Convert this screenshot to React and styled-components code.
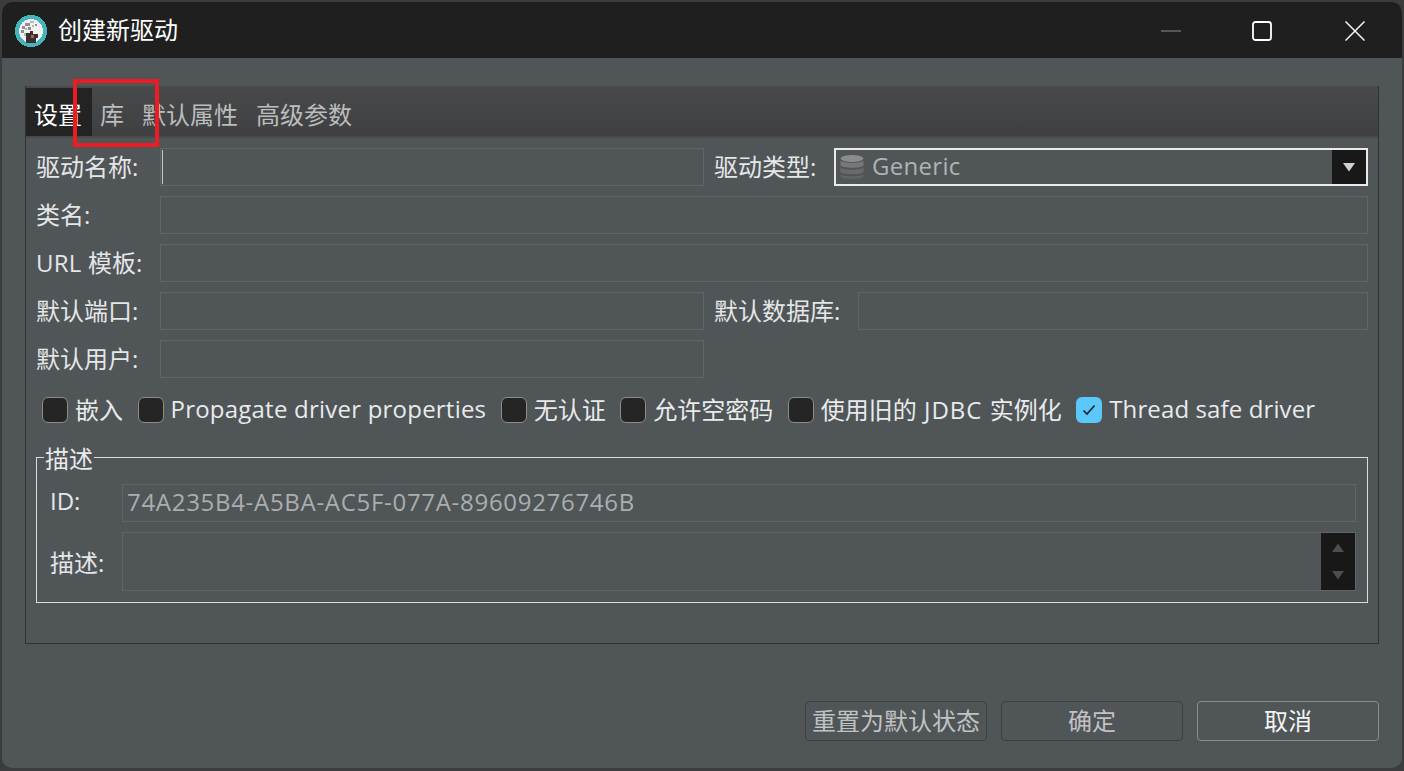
import React from "react";
import styled, { createGlobalStyle } from "styled-components";

const GlobalStyle = createGlobalStyle`
  html, body {
    margin: 0;
    padding: 0;
    background: #3b3c3d;
  }
  body {
    font-family: "Open Sans", "Noto Sans CJK SC", sans-serif;
    font-size: 24px;
    overflow: hidden;
  }
  * {
    box-sizing: border-box;
  }
`;

const Tracked = styled.span`
  letter-spacing: ${({ $ls }) => $ls}px;
`;

const Logo = () => (
  <LogoSvg viewBox="0 0 32 32" width="32" height="32" shapeRendering="crispEdges">
    <circle cx="16" cy="16" r="16" fill="#45b4bf" />
    <circle cx="16" cy="16" r="12" fill="#f2f2f2" />
    <path d="M7 11h3v3H7zM10 8h5v3h-5zM6 15h3v3H6zM13 12h3v3h-3zM20 9h2v2h-2z" fill="#8f8f8f" />
    <path d="M15 6h4v2h-4zM10 13h2v2h-2zM17 10h2v2h-2zM9 18h2v3H9z" fill="#b5b5b5" />
    <path d="M11 18h4v-2h3v3h5v4h-2v5H11z" fill="#3c2f2d" />
    <path d="M16 20h3v3h-3z" fill="#8a6e68" />
  </LogoSvg>
);

const Minimize = () => (
  <svg width="20" height="20" viewBox="0 0 20 20">
    <path d="M0 10h20" stroke="#6a6a6a" strokeWidth="1.6" />
  </svg>
);

const Maximize = () => (
  <svg width="20" height="20" viewBox="0 0 20 20">
    <rect x="1" y="1" width="18" height="18" rx="2.5" fill="none" stroke="#fff" strokeWidth="1.8" />
  </svg>
);

const Close = () => (
  <svg width="20" height="20" viewBox="0 0 20 20">
    <path d="M0.5 0.5l19 19M19.5 0.5l-19 19" stroke="#f4f4f4" strokeWidth="1.5" />
  </svg>
);

const DatabaseIcon = () => (
  <svg width="26" height="26" viewBox="0 0 26 26">
    <ellipse cx="13" cy="4.5" rx="11.5" ry="3.5" fill="#8b8b8b" />
    <path d="M1.5 6.5c2 3 21 3 23 0v5c-2 3-21 3-23 0z" fill="#777" />
    <path d="M1.5 13.5c2 3 21 3 23 0v4.5c-2 3-21 3-23 0z" fill="#6a6a6a" />
    <path d="M1.5 20c2 3 21 3 23 0v2.500c-2 3.500-21 3.500-23 0z" fill="#626262" />
  </svg>
);

const Triangle = ({ up, color }) => (
  <svg width="12" height="9" viewBox="0 0 12 9">
    <path d={up ? "M6 0.500L12 9H0z" : "M0 0h12L6 8.500z"} fill={color} />
  </svg>
);

const checks = [
  { id: "embedded", label: "嵌入" },
  { id: "propagate", label: <Tracked $ls={0.22}>Propagate driver properties</Tracked> },
  { id: "noauth", label: "无认证" },
  { id: "empty", label: "允许空密码" },
  { id: "legacy", label: <>使用旧的<Tracked $ls={1}> JDBC </Tracked>实例化</> },
  { id: "thread", label: <Tracked $ls={0.12}>Thread safe driver</Tracked>, checked: true },
];

const App = () => {
  return (
    <>
      <GlobalStyle />
      <Window>
        <TitleBar>
          <Logo />
          <TitleText>创建新驱动</TitleText>
          <CaptionButton $w={88}>
            <Minimize />
          </CaptionButton>
          <CaptionButton $w={94}>
            <Maximize />
          </CaptionButton>
          <CaptionButton $w={92}>
            <Close />
          </CaptionButton>
        </TitleBar>

        <Content>
          <Folder>
            <TabStrip>
              <Tab $active>设置</Tab>
              <Tab>库</Tab>
              <Tab>默认属性</Tab>
              <Tab>高级参数</Tab>
              <RedFrame />
            </TabStrip>

            <Panel>
              <Row>
                <Label $w={124}>驱动名称:</Label>
                <Field $w={544}>
                  <Caret />
                </Field>
                <Label $w={120} $ml={10}>驱动类型:</Label>
                <Combo>
                  <ComboIcon>
                    <DatabaseIcon />
                  </ComboIcon>
                  <ComboValue>Generic</ComboValue>
                  <ComboArrow>
                    <Triangle color="#d0d0d0" />
                  </ComboArrow>
                </Combo>
              </Row>
              <Row>
                <Label $w={124}>类名:</Label>
                <Field />
              </Row>
              <Row>
                <Label $w={124}><Tracked $ls={0.25}>URL </Tracked>模板:</Label>
                <Field />
              </Row>
              <Row>
                <Label $w={124}>默认端口:</Label>
                <Field $w={544} />
                <Label $w={144} $ml={10}>默认数据库:</Label>
                <Field />
              </Row>
              <Row>
                <Label $w={124}>默认用户:</Label>
                <Field $w={544} />
              </Row>

              <CheckRow>
                {checks.map((c) => (
                  <CheckItem key={c.id}>
                    <CheckBox $checked={c.checked}>
                      {c.checked && (
                        <svg width="14" height="12" viewBox="0 0 14 12">
                          <path d="M1.500 6.500L5 10l7.500-8.500" fill="none" stroke="#16202a" strokeWidth="1.600" />
                        </svg>
                      )}
                    </CheckBox>
                    <CheckText>{c.label}</CheckText>
                  </CheckItem>
                ))}
              </CheckRow>

              <Group>
                <Legend>描述</Legend>
                <Row $mt={10}>
                  <GroupLabel $pb={5}>ID:</GroupLabel>
                  <Field>
                    <FieldValue>74A235B4-A5BA-AC5F-077A-89609276746B</FieldValue>
                  </Field>
                </Row>
                <Row $h={59}>
                  <GroupLabel>描述:</GroupLabel>
                  <Field $end>
                    <ScrollBar>
                      <Triangle up color="#4d4d4d" />
                      <Triangle color="#4d4d4d" />
                    </ScrollBar>
                  </Field>
                </Row>
              </Group>
            </Panel>
          </Folder>

          <Footer>
            <FootButton $dim>重置为默认状态</FootButton>
            <FootButton $dim>确定</FootButton>
            <FootButton>取消</FootButton>
          </Footer>
        </Content>
      </Window>
    </>
  );
};

export default App;

const Window = styled.div`
  margin: 2px 2px 0;
  height: 766px;
  background: #505557;
  border-radius: 10px;
  overflow: hidden;
`;

const TitleBar = styled.div`
  height: 56px;
  background: #201f20;
  display: flex;
  align-items: center;
  padding: 0 1px 0 13px;
  color: #fff;
`;

const LogoSvg = styled.svg`
  flex: none;
  margin-top: 2px;
`;

const TitleText = styled.div`
  margin-left: 11px;
  flex: 1;
  line-height: 32px;
`;

const CaptionButton = styled.div`
  width: ${({ $w }) => $w}px;
  height: 56px;
  display: flex;
  align-items: center;
  justify-content: center;
  padding-top: 2px;
`;

const Content = styled.div`
  padding: 28px 23px 0;
`;

const Folder = styled.div`
  height: 558px;
  border: 1px solid #2f3033;
  border-top: 0;
`;

const TabStrip = styled.div`
  position: relative;
  height: 52px;
  display: flex;
  align-items: flex-end;
  background: linear-gradient(#48494b, #3f4041);
  border-bottom: 2px solid #47494b;
`;

const Tab = styled.div`
  height: 48px;
  padding: 0 10px 0 8px;
  line-height: 54px;
  color: ${({ $active }) => ($active ? "#fff" : "#bbbdbf")};
  background: ${({ $active }) => ($active ? "#232323" : "transparent")};
`;

const RedFrame = styled.div`
  position: absolute;
  left: 47px;
  top: -7px;
  width: 86px;
  height: 68px;
  border: 4px solid #ed1c24;
`;

const Panel = styled.div`
  padding: 10px 10px 0;
`;

const Row = styled.div`
  display: flex;
  align-items: center;
  height: ${({ $h }) => $h || 38}px;
  margin-top: ${({ $mt }) => $mt || 0}px;
  margin-bottom: 10px;
`;

const Label = styled.div`
  flex: none;
  width: ${({ $w }) => $w}px;
  margin-left: ${({ $ml }) => $ml || 0}px;
  padding-bottom: 4px;
  color: #e4e6e8;
  white-space: nowrap;
`;

const Field = styled.div`
  position: relative;
  flex: ${({ $w }) => ($w ? "none" : "1")};
  width: ${({ $w }) => ($w ? `${$w}px` : "auto")};
  height: 100%;
  border: 1px solid #626466;
  display: flex;
  align-items: center;
  justify-content: ${({ $end }) => ($end ? "flex-end" : "flex-start")};
`;

const Caret = styled.div`
  width: 1px;
  height: 34px;
  margin-left: 1px;
  background: #c8c8c8;
`;

const FieldValue = styled.div`
  padding: 0 0 4px 4px;
  letter-spacing: 0.7px;
  color: #abadaf;
  white-space: nowrap;
`;

const Combo = styled.div`
  flex: 1;
  height: 100%;
  border: 2px solid #e9e9e9;
  display: flex;
  align-items: center;
`;

const ComboIcon = styled.div`
  display: flex;
  margin-left: 3px;
`;

const ComboValue = styled.div`
  margin-left: 7px;
  padding-bottom: 4px;
  letter-spacing: 0.3px;
  flex: 1;
  color: #b0b2b4;
`;

const ComboArrow = styled.div`
  width: 34px;
  height: 100%;
  background: #181818;
  display: flex;
  align-items: center;
  justify-content: center;
`;

const CheckRow = styled.div`
  display: flex;
  align-items: center;
  gap: 14.5px;
  margin-top: 19px;
  padding-left: 6px;
  height: 26px;
`;

const CheckItem = styled.div`
  display: flex;
  align-items: center;
  gap: 7px;
  color: #e8eaec;
  white-space: nowrap;
`;

const CheckText = styled.div`
  padding-bottom: 3px;
`;

const CheckBox = styled.div`
  flex: none;
  width: 26px;
  height: 26px;
  border-radius: 6px;
  border: ${({ $checked }) => ($checked ? "0" : "1.5px solid #8c8c8c")};
  background: ${({ $checked }) => ($checked ? "#5ac8fa" : "#252525")};
  display: flex;
  align-items: center;
  justify-content: center;
`;

const Group = styled.fieldset`
  margin: 17px 0 0;
  padding: 0 11px 1px 13px;
  border: 1px solid #dcdcdc;
  min-width: 0;
`;

const Legend = styled.legend`
  margin-left: -6px;
  padding: 0 1px;
  line-height: 34px;
  position: relative;
  top: 2px;
  color: #e8eaec;
`;

const GroupLabel = styled.div`
  flex: none;
  width: 72px;
  padding-bottom: ${({ $pb }) => $pb || 0}px;
  color: #e4e6e8;
`;

const ScrollBar = styled.div`
  width: 34px;
  height: 100%;
  background: #181818;
  display: flex;
  flex-direction: column;
  align-items: center;
  justify-content: space-around;
`;

const Footer = styled.div`
  display: flex;
  justify-content: flex-end;
  gap: 14px;
  margin-top: 57px;
`;

const FootButton = styled.div`
  width: 182px;
  height: 40px;
  padding-bottom: 4px;
  border-radius: 4px;
  border: 1px solid ${({ $dim }) => ($dim ? "#3e3f41" : "#8b8d8f")};
  color: ${({ $dim }) => ($dim ? "#c0c2c4" : "#f4f4f4")};
  display: flex;
  align-items: center;
  justify-content: center;
  white-space: nowrap;
`;
